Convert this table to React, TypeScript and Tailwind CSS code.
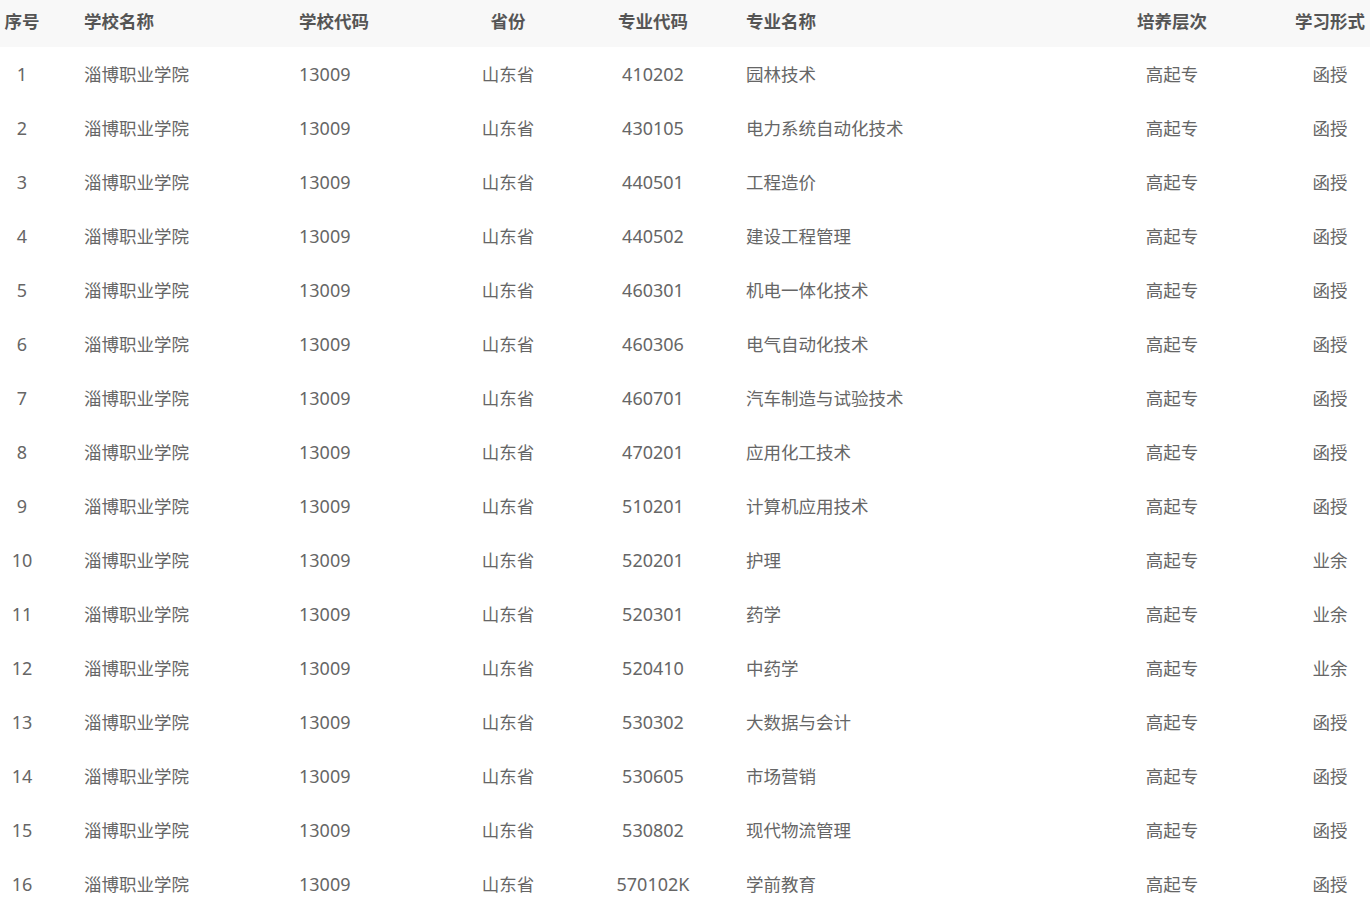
const rows: [string, string, string, string][] = [
  ['410202', '园林技术', '高起专', '函授'],
  ['430105', '电力系统自动化技术', '高起专', '函授'],
  ['440501', '工程造价', '高起专', '函授'],
  ['440502', '建设工程管理', '高起专', '函授'],
  ['460301', '机电一体化技术', '高起专', '函授'],
  ['460306', '电气自动化技术', '高起专', '函授'],
  ['460701', '汽车制造与试验技术', '高起专', '函授'],
  ['470201', '应用化工技术', '高起专', '函授'],
  ['510201', '计算机应用技术', '高起专', '函授'],
  ['520201', '护理', '高起专', '业余'],
  ['520301', '药学', '高起专', '业余'],
  ['520410', '中药学', '高起专', '业余'],
  ['530302', '大数据与会计', '高起专', '函授'],
  ['530605', '市场营销', '高起专', '函授'],
  ['530802', '现代物流管理', '高起专', '函授'],
  ['570102K', '学前教育', '高起专', '函授'],
]

// column widths add up to the 1370px window
const grid = 'grid grid-cols-[44px_255px_150px_118px_172px_315px_236px_80px] items-center'

export default function App() {
  return (
    <div
      className="w-[1370px] bg-white text-[17.5px]"
      style={{ fontFamily: '"Noto Sans", "Noto Sans CJK SC", sans-serif' }}
    >
      <div className={`${grid} h-[47px] pb-[5px] bg-[#f8f8f8] font-bold text-[#555]`}>
        <div className="text-center">序号</div>
        <div className="pl-[40px]">学校名称</div>
        <div>学校代码</div>
        <div className="text-center">省份</div>
        <div className="text-center">专业代码</div>
        <div className="pl-[7px]">专业名称</div>
        <div className="text-center">培养层次</div>
        <div className="text-center">学习形式</div>
      </div>
      {rows.map(([code, name, level, form], i) => (
        <div key={code} className={`${grid} h-[54px] text-[#666]`}>
          <div className="text-center text-[18px]">{i + 1}</div>
          <div className="pl-[40px]">淄博职业学院</div>
          <div className="text-[18px]">13009</div>
          <div className="text-center">山东省</div>
          <div className="text-center text-[18px]">{code}</div>
          <div className="pl-[7px]">{name}</div>
          <div className="text-center">{level}</div>
          <div className="text-center">{form}</div>
        </div>
      ))}
    </div>
  )
}
